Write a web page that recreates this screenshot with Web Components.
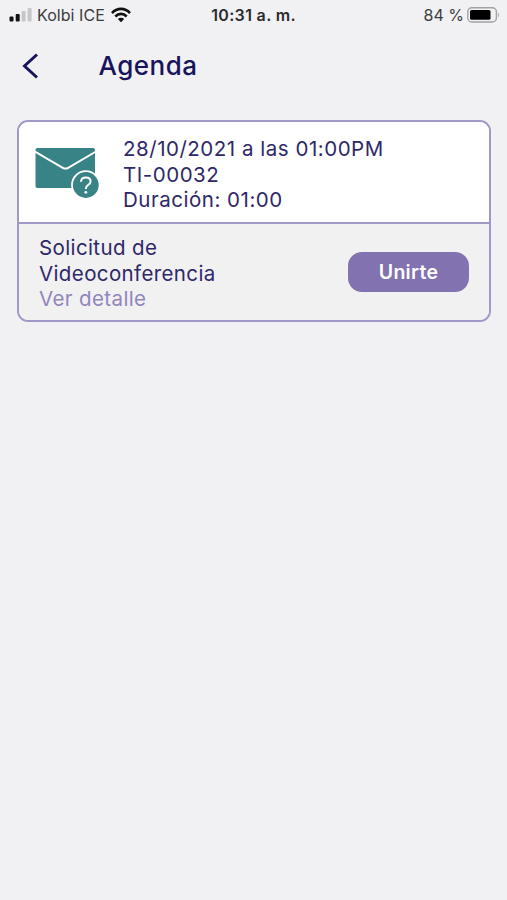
<!DOCTYPE html>
<html lang="es">
<head>
<meta charset="UTF-8">
<meta name="viewport" content="width=device-width, initial-scale=1.0">
<title>Agenda</title>
<style>
  body {
    margin: 0;
    min-height: 100vh;
    background-color: #f1f1f4;
    font-family: Inter, "Liberation Sans", sans-serif;
    color: #2e2868;
  }
</style>
</head>
<body>

<status-bar>
  <span slot="carrier">Kolbi ICE</span>
  <span slot="time">10:31 a. m.</span>
  <span slot="battery">84 %</span>
</status-bar>

<page-header>Agenda</page-header>

<agenda-card>
  <mail-icon slot="icon"></mail-icon>
  <div slot="info">28/10/2021 a las 01:00PM</div>
  <div slot="info">TI-00032</div>
  <div slot="info">Duración: 01:00</div>
  <div slot="title">Solicitud de Videoconferencia</div>
  <span slot="link">Ver detalle</span>
  <join-button slot="action">Unirte</join-button>
</agenda-card>

<script>
class StatusBar extends HTMLElement {
  constructor() {
    super();
    this.attachShadow({ mode: 'open' }).innerHTML = `
      <style>
        :host {
          display: grid;
          grid-template-columns: 1fr auto 1fr;
          align-items: center;
          height: 29px;
          padding: 0 7px 0 9px;
          box-sizing: border-box;
          font-size: 16px;
          line-height: 20px;
          color: #3c3c3e;
          white-space: nowrap;
        }
        .left, .right { display: flex; align-items: center; }
        .right { justify-content: flex-end; }
        .carrier { margin: 0 6px 0 5px; letter-spacing: 0.05px; }
        .time { margin-right: 2px; font-weight: 600; color: #2b2b2d; letter-spacing: 0.35px; }
        .battery { margin-right: 3px; }
        svg { display: block; flex: none; }
      </style>
      <div class="left">
        <svg width="23" height="16" viewBox="0 0 23 16">
          <rect x="0.5" y="9.5" width="4" height="5" rx="1" fill="#111"/>
          <rect x="6.7" y="7" width="4" height="7.5" rx="1" fill="#111"/>
          <rect x="12.6" y="4" width="4" height="10.5" rx="1" fill="#c6c6c9"/>
          <rect x="18.6" y="1" width="4" height="13.5" rx="1" fill="#c6c6c9"/>
        </svg>
        <span class="carrier"><slot name="carrier"></slot></span>
        <svg width="20" height="16" viewBox="0 0 20 16" fill="none" stroke="#111" stroke-width="2.6">
          <path d="M1 6.1C6 0.5 14 0.5 19 6.1"/>
          <path d="M4.3 9.5C7.6 6 12.4 6 15.7 9.5"/>
          <path d="M6.8 12Q10 9.4 13.2 12L10 15.2Z" fill="#111" stroke="none"/>
        </svg>
      </div>
      <div class="time"><slot name="time"></slot></div>
      <div class="right">
        <span class="battery"><slot name="battery"></slot></span>
        <svg width="33" height="16" viewBox="0 0 33 16">
          <rect x="0.8" y="0.8" width="28.6" height="14.2" rx="4" fill="none" stroke="#a3a3a6" stroke-width="1.4"/>
          <rect x="3" y="3" width="20.5" height="9.8" rx="1.5" fill="#000"/>
          <path d="M31 5.5Q33 8 31 10.5Z" fill="#a3a3a6"/>
        </svg>
      </div>
    `;
  }
}

class PageHeader extends HTMLElement {
  constructor() {
    super();
    this.attachShadow({ mode: 'open' }).innerHTML = `
      <style>
        :host {
          display: flex;
          align-items: center;
          height: 73px;
          padding-left: 21px;
          color: #17145c;
        }
        svg { display: block; margin-right: 59.5px; }
        h1 { margin: 0; font-size: 26px; font-weight: 500; line-height: 32px; letter-spacing: 0.5px; }
      </style>
      <svg width="18" height="28" viewBox="0 0 18 28" fill="none" stroke="currentColor" stroke-width="3">
        <path d="M16 2.5L3.5 14L16 25.5"/>
      </svg>
      <h1><slot></slot></h1>
    `;
  }
}

class MailIcon extends HTMLElement {
  constructor() {
    super();
    this.attachShadow({ mode: 'open' }).innerHTML = `
      <style>
        :host { display: block; width: 66px; height: 52px; }
        svg { display: block; }
      </style>
      <svg width="66" height="52" viewBox="0 0 66 52" fill="none">
        <rect x="0.5" y="1" width="59.5" height="40" rx="2" fill="#388386"/>
        <path d="M0 4.5L27.8 20.8Q30.5 22.4 33.2 20.8L61 4.5" stroke="#fff" stroke-width="2"/>
        <circle cx="50.8" cy="38" r="13.8" fill="#388386" stroke="#fff" stroke-width="1.8"/>
        <path d="M46 34.8Q46.2 30.6 50.8 30.6Q55.6 30.6 55.6 34.6Q55.6 36.8 53 38.2Q50.8 39.4 50.8 42" stroke="#fff" stroke-width="2"/>
        <circle cx="50.8" cy="45.3" r="1.4" fill="#fff"/>
      </svg>
    `;
  }
}

class JoinButton extends HTMLElement {
  constructor() {
    super();
    this.attachShadow({ mode: 'open' }).innerHTML = `
      <style>
        :host { display: block; }
        button {
          display: block;
          width: 121px;
          height: 40px;
          padding: 0;
          border: 0;
          border-radius: 14px;
          background-color: #8272b0;
          color: #fff;
          font: 600 19.5px/40px Inter, "Liberation Sans", sans-serif;
          letter-spacing: 0.3px;
        }
      </style>
      <button><slot></slot></button>
    `;
  }
}

class AgendaCard extends HTMLElement {
  constructor() {
    super();
    this.attachShadow({ mode: 'open' }).innerHTML = `
      <style>
        :host {
          display: block;
          box-sizing: border-box;
          height: 202px;
          margin: 18px 16px 0 17px;
          border: 2px solid #a098c6;
          border-radius: 11px;
          overflow: hidden;
          font-size: 20.5px;
          line-height: 25.6px;
          letter-spacing: 0.52px;
        }
        .top {
          display: flex;
          box-sizing: border-box;
          height: 102px;
          padding: 14px 0 0 16px;
          border-bottom: 2px solid #a098c6;
          background-color: #fff;
        }
        .icon { width: 88px; padding-top: 11px; }
        .bottom {
          display: flex;
          box-sizing: border-box;
          justify-content: space-between;
          height: 96px;
          padding: 11px 20px 0 20px;
          background-color: #f1f1f2;
        }
        .text { width: 200px; letter-spacing: 0.38px; }
        .link { color: #9185bd; }
        .action { padding-top: 17px; }
      </style>
      <div class="top">
        <div class="icon"><slot name="icon"></slot></div>
        <div><slot name="info"></slot></div>
      </div>
      <div class="bottom">
        <div class="text">
          <slot name="title"></slot>
          <div class="link"><slot name="link"></slot></div>
        </div>
        <div class="action"><slot name="action"></slot></div>
      </div>
    `;
  }
}

customElements.define('status-bar', StatusBar);
customElements.define('page-header', PageHeader);
customElements.define('mail-icon', MailIcon);
customElements.define('join-button', JoinButton);
customElements.define('agenda-card', AgendaCard);
</script>
</body>
</html>
